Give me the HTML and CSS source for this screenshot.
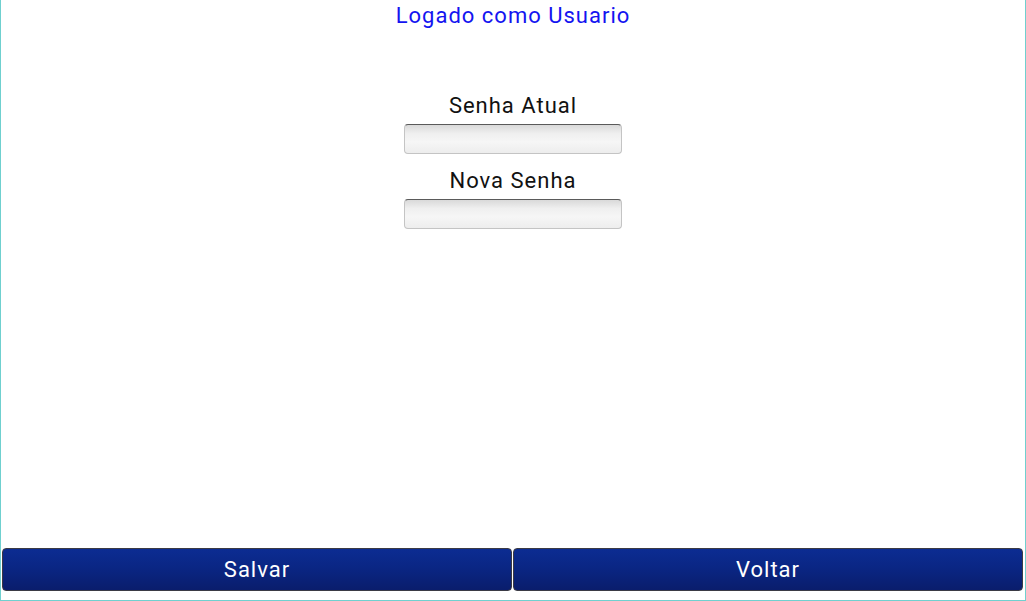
FILE: index.html
```html
<html>
  <head>
    <link rel="stylesheet" href="styles.css">
    <title>Alterar Senha</title>
  </head>
  <body>
    <div class="screen">
      <div class="logged">Logado como Usuario</div>
      <form class="fields">
        <label for="atual">Senha Atual</label>
        <input id="atual" type="password">
        <label for="nova">Nova Senha</label>
        <input id="nova" type="password">
      </form>
      <div class="actions">
        <button class="btn">Salvar</button>
        <button class="btn">Voltar</button>
      </div>
    </div>
  </body>
</html>
```
FILE: styles.css
```css
body {
  margin: 0;
  font-family: Roboto, "Noto Sans", sans-serif;
  background: #fff;
}

.screen {
  height: 601px;
  box-sizing: border-box;
  border: solid 1px #6fd0cf;
  border-top: none;
  display: flex;
  flex-direction: column;
}

.logged {
  color: #1414f0;
  font-size: 22px;
  line-height: 26px;
  letter-spacing: 1px;
  text-align: center;
  padding-top: 3px;
}

.fields {
  margin: 64px 0 0 0;
  display: flex;
  flex-direction: column;
  align-items: center;
}

.fields label {
  font-size: 22px;
  line-height: 26px;
  letter-spacing: 1px;
  color: #111;
  margin-bottom: 5px;
}

.fields input {
  width: 218px;
  height: 30px;
  box-sizing: border-box;
  border: solid 1px #c4c4c4;
  border-top-color: #5a5a5a;
  border-radius: 4px;
  background: linear-gradient(#d9d9d9, #efefef 30%, #f6f6f6 60%, #ededed);
  margin-bottom: 14px;
  outline: none;
}

.actions {
  margin-top: auto;
  display: flex;
  gap: 1px;
  padding: 0 2px 9px 1px;
}

.btn {
  flex: 1;
  height: 43px;
  border: solid 1px #3b3b45;
  border-radius: 4px;
  background: linear-gradient(#0c2c92, #0a2684 45%, #0a1d6c);
  color: #fff;
  font-family: Roboto, "Noto Sans", sans-serif;
  font-size: 22px;
  letter-spacing: 1px;
  padding: 0;
}
```
